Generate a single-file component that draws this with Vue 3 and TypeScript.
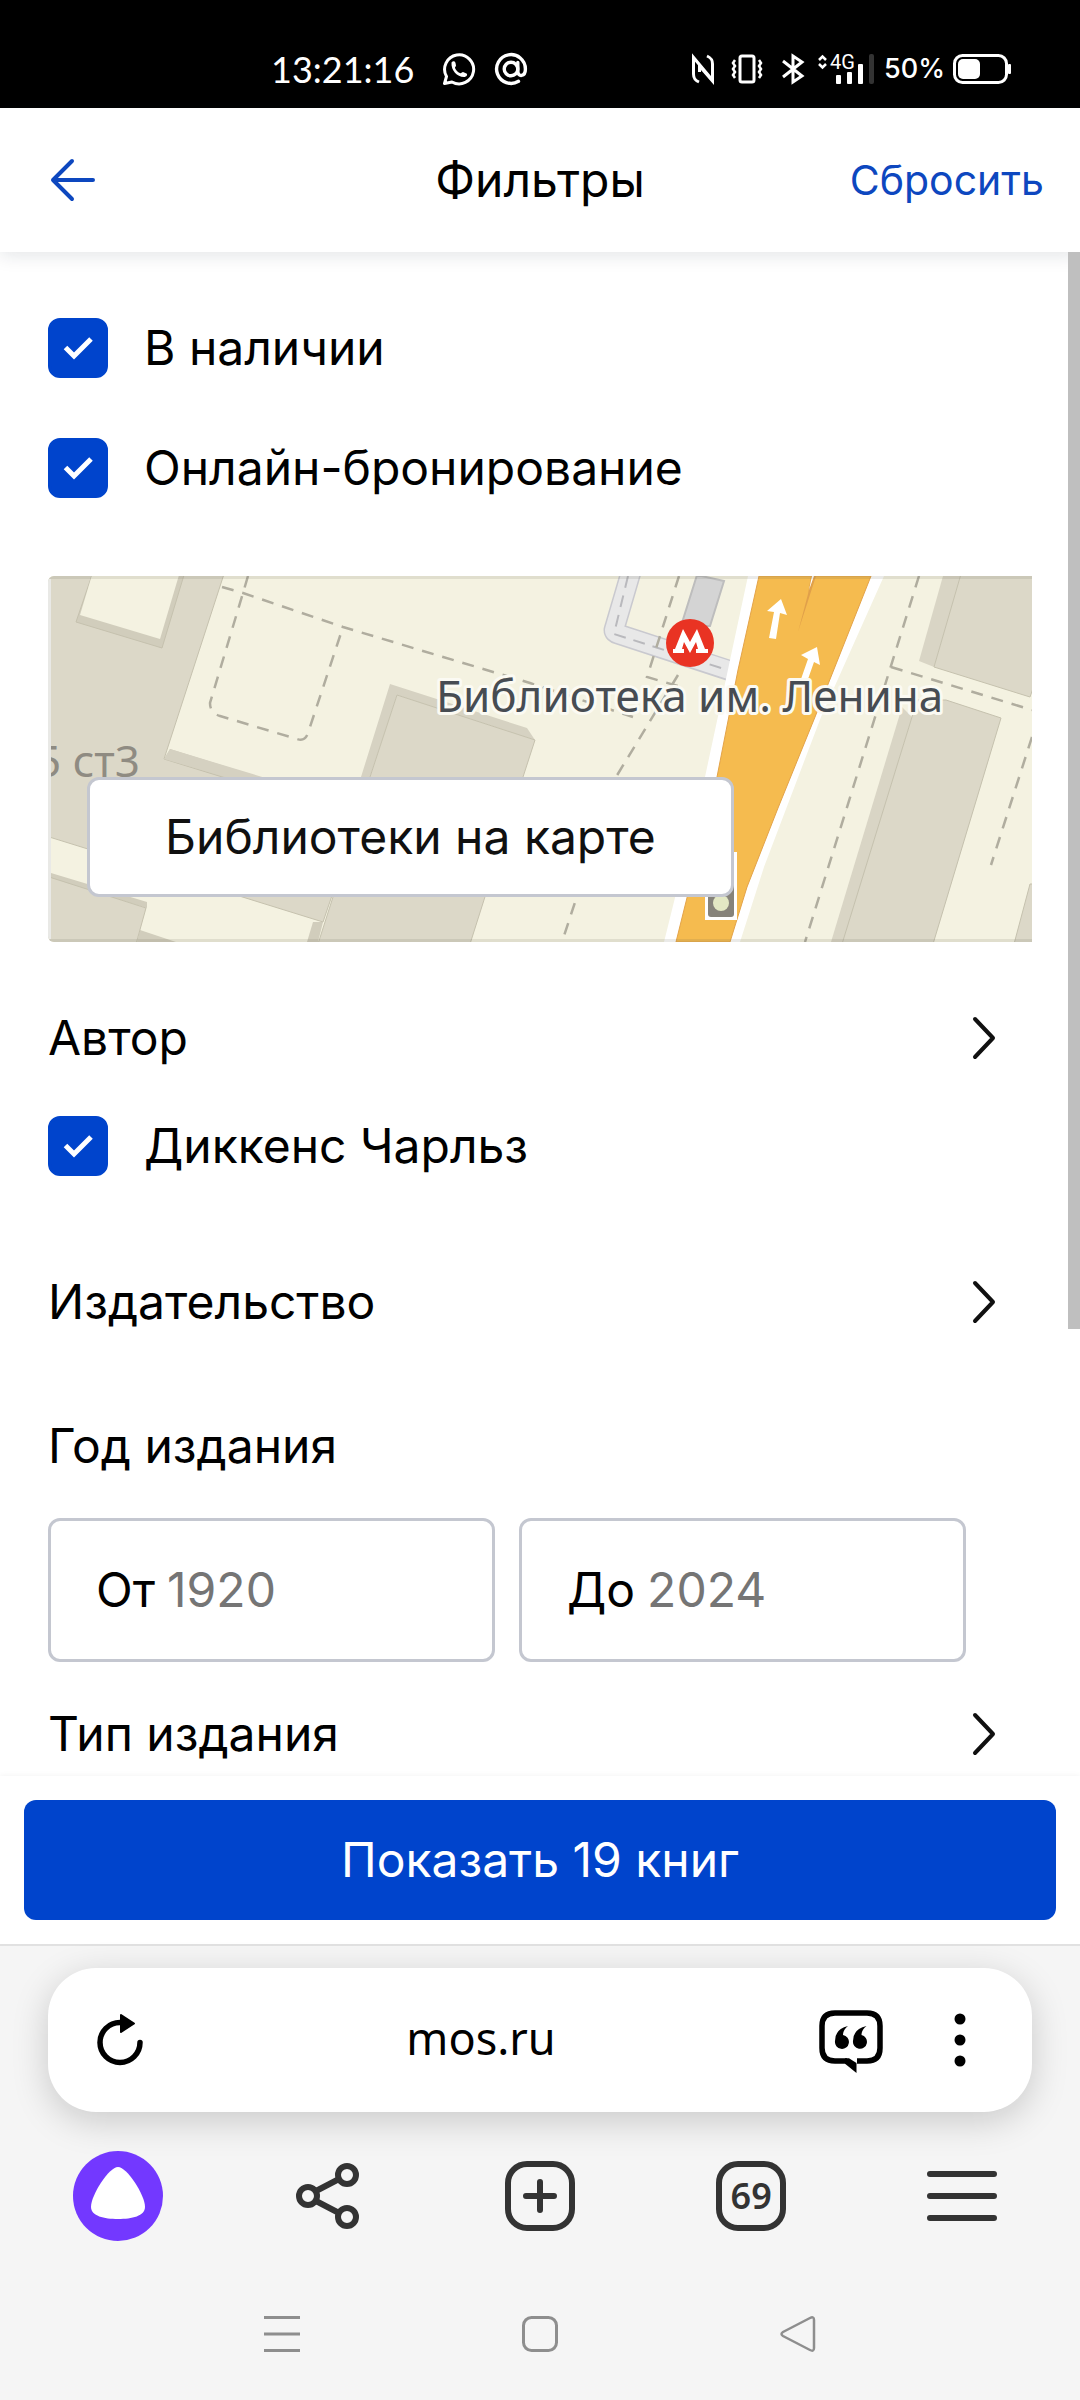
<script setup lang="ts">
import { ref } from 'vue'

interface Option {
  id: string
  label: string
  checked: boolean
}

const availability = ref<Option[]>([
  { id: 'in-stock', label: 'В наличии', checked: true },
  { id: 'online', label: 'Онлайн-бронирование', checked: true },
])
const authors = ref<Option[]>([{ id: 'dickens', label: 'Диккенс Чарльз', checked: true }])
const yearFrom = ref('')
const yearTo = ref('')
const found = 19
const openTabs = 69
</script>

<template>
  <div class="screen">
    <div class="status">
      <div class="status-group left">
        <span class="clock">13:21:16</span>
        <svg width="34" height="34" viewBox="0 0 34 34" fill="none" stroke="#fff" stroke-width="3">
          <path d="M2.500 31.500 L4.500 24.500 A14.500 14.500 0 1 1 10 30 Z" stroke-linejoin="round" />
          <path d="M9.500 10.500 C11 8.500 13 9 13.500 11 L14 13.500 C14 14.500 12.800 15 13 16 C14 18.500 16 20.500 18.500 21.200 C19.500 21.300 20 20 21 20 L24.500 21.500 C26 22.500 24.500 25 22 25 C15 25 9 18.500 9.500 10.500 Z" fill="#fff" stroke="none" />
        </svg>
        <svg width="34" height="34" viewBox="0 0 34 34" fill="none" stroke="#fff" stroke-width="3.400" stroke-linecap="round">
          <circle cx="17" cy="17" r="6.800" />
          <path d="M23.800 10.500 V19 C23.800 25.500 31.400 25 31.400 17 A14.400 14.400 0 1 0 24.500 29.300" />
        </svg>
      </div>
      <div class="status-group right">
        <svg class="nfc" width="24" height="32" viewBox="0 0 24 32" fill="none" stroke="#fff" stroke-width="3">
          <path d="M8 29 C3.500 27 2.500 25 2.500 21 V4.500 L20.500 26" />
          <path d="M16 3 C20.500 5 21.500 7 21.500 11 V28 L8.500 13 V19" />
        </svg>
        <svg class="vibrate" width="32" height="32" viewBox="0 0 32 32" fill="none" stroke="#fff" stroke-width="3">
          <rect x="9" y="3" width="14" height="26" rx="2" />
          <path d="M4 7 L2 10 L4 13 L2 16 L4 19 L2 22 L4 25 M28 7 L30 10 L28 13 L30 16 L28 19 L30 22 L28 25" stroke-width="2.500" />
        </svg>
        <svg class="bluetooth" width="24" height="32" viewBox="0 0 24 32" fill="none" stroke="#fff" stroke-width="3">
          <path d="M2 8 L21 23 L12 29 V3 L21 9 L2 24" />
        </svg>
        <svg class="signal" width="58" height="32" viewBox="0 0 58 32" fill="#fff">
          <path d="M2 7 L5.500 3.500 L9 7 M2 11 L5.500 14.500 L9 11" fill="none" stroke="#fff" stroke-width="2.500" />
          <text x="13" y="16" class="net">4G</text>
          <rect x="19" y="22" width="5" height="9" rx="1" />
          <rect x="30" y="19" width="5" height="12" rx="1" />
          <rect x="41" y="11" width="5" height="20" rx="1" />
          <rect x="52" y="1" width="5" height="30" rx="2" fill="#333" />
        </svg>
        <span class="percent">50%</span>
        <svg width="58" height="32" viewBox="0 0 58 32" fill="none">
          <rect x="1.500" y="2.500" width="52" height="27" rx="8" stroke="#fff" stroke-width="3" />
          <rect x="5" y="6" width="22" height="20" rx="5" fill="#fff" />
          <rect x="55" y="11" width="3" height="10" rx="1" fill="#fff" />
        </svg>
      </div>
    </div>

    <header class="header">
      <button class="plain back" type="button" aria-label="Назад">
        <svg width="48" height="48" viewBox="0 0 48 48" fill="none" stroke="#0d47bf" stroke-width="4" stroke-linecap="round" stroke-linejoin="round">
          <path d="M45 24 H5 M24 5 L5 24 L24 43" />
        </svg>
      </button>
      <h1 class="title">Фильтры</h1>
      <button class="plain reset" type="button">Сбросить</button>
    </header>

    <main class="filters">
      <div class="scrollbar"></div>

      <div class="options">
        <label v-for="o in availability" :key="o.id" class="option">
          <span class="tick">
            <input v-model="o.checked" type="checkbox" />
            <svg v-if="o.checked" width="60" height="60" viewBox="0 0 60 60"><path d="M17.500 29.500 L26 38 L43 21" /></svg>
          </span>
          {{ o.label }}
        </label>
      </div>

      <div class="map">
        <svg class="map-art" viewBox="0 0 984 366" preserveAspectRatio="xMinYMid slice">
          <rect width="984" height="366" fill="#f4f2e1" />
          <g fill="#d1cdbc">
            <path d="M122 173 L320 235 L310 260 L116 183 Z" />
            <path d="M265 346 L275 346 L270 366 L259 366 Z" />
            <path d="M92 354 L128 366 L89 366 Z" />
            <path d="M3 297 L99 326 L99 332 L3 303 Z" />
          </g>
          <path d="M342 108 L479 152 L487 164 L349 119 L322 201 L313 201 Z" fill="#d6d2c2" />
          <g fill="#dcd8c8" stroke="#c5c1ae" stroke-width="1">
            <path d="M-2 -2 H176 L116 183 L310 243 L275 346 L-2 260 Z" />
            <path d="M349 119 L487 164 L475 201 L422 368 H270 L285 321 L322 201 Z" />
            <path d="M-2 300 L98 332 L88 368 H-2 Z" />
          </g>
          <path d="M122 173 L310 230 V240 L116 183 Z" fill="#d5d1c1" />
          <path d="M44 -1 L28 46 L114 72 L136 -1 Z" fill="#d1cdbc" stroke="#c5c1ae" stroke-width="1" />
          <path d="M44 -1 L32 39 L112 63 L131 -1 Z" fill="#f4f2e1" />
          <g fill="#d9d5c5">
            <path d="M895 0 L871 85 L886 91 L913 0 Z" />
            <path d="M854 131 L783 366 H795 L864 141 Z" />
          </g>
          <g fill="#dcd8c8" stroke="#c5c1ae" stroke-width="1">
            <path d="M913 -2 L886 91 L982 121 L990 98 V-2 Z" />
            <path d="M864 141 L868 124 L898 124 L953 142 L885 368 H794 Z" />
            <path d="M982 308 L966 368 H990 V308 Z" />
          </g>
          <g fill="none" stroke-linejoin="round">
            <path d="M583 -4 L566 54 Q566 57 570 58 L692 98" stroke="#c9c9cf" stroke-width="21" />
            <path d="M583 -4 L566 54 Q566 57 570 58 L693 98" stroke="#e8e8e8" stroke-width="18" />
            <path d="M580 0 L566 58 L692 98" stroke="#b9b9bd" stroke-width="2" stroke-dasharray="12 8" />
          </g>
          <path d="M649 -1 L676 5 L662 50 L633 50 Z" fill="#d4d4d4" stroke="#bdbdbd" stroke-width="2" />
          <g fill="none" stroke="#b0ad9f" stroke-width="2.500" stroke-dasharray="12 9">
            <path d="M174 11 L195 17 L295 51 L482 107 L585 141" />
            <path d="M200 0 L195 17 L162 127 Q162 137 172 140 L249 163 Q257 166 260 157 L295 51" />
            <path d="M631 0 L599 101 L630 110" />
            <path d="M630 99 L568 201 L514 366" />
            <path d="M871 0 L757 366" />
            <path d="M843 91 L984 134" />
            <path d="M984 161 L943 289" />
          </g>
          <path d="M700 0 L657 201 L616 366 H692 L716 291 L773 141 L836 0 Z" fill="#fff" />
          <path d="M711 0 L690 94 L669 201 L628 366 H682 L699 311 L730 232 L767 141 L823 0 Z" fill="#f5bb4f" stroke="#e3a349" stroke-width="1" />
          <path d="M763 0 L760 18 L750 56 L768 0 Z" fill="#e0a04a" />
          <path d="M764 0 L761 14 L766 0 Z" fill="#fff" />
          <g fill="#fff">
            <path d="M733 23 L739 39 L732 37 L728 63 L721 62 L726 36 L719 35 Z" />
            <path d="M769 71 L772 89 L766 86 L759 106 L753 103 L760 83 L753 79 Z" />
            <path d="M684 276 H689 V344 H657 V320 Z" />
          </g>
          <rect x="660" y="277" width="26" height="64" rx="3" fill="#86837a" />
          <circle cx="673" cy="327" r="8" fill="#e3e8c4" />
          <circle cx="642" cy="67" r="24" fill="#e93323" />
          <path d="M625 77 V73 H627 L635 53 L642 66 L649 53 L657 73 H660 V77 H648 V73 H650 L648 66 L642 77 L636 66 L634 73 H636 V77 Z" fill="#fff" />
          <text class="place" x="388" y="136">Библиотека им. Ленина</text>
          <text class="house" x="92" y="201" text-anchor="end">5 ст3</text>
        </svg>
        <button class="map-button" type="button">Библиотеки на карте</button>
      </div>

      <button class="plain section" type="button">
        Автор
        <svg width="30" height="48" viewBox="0 0 30 48"><path d="M6 5 L24 24 L6 43" /></svg>
      </button>
      <div class="options author">
        <label v-for="o in authors" :key="o.id" class="option">
          <span class="tick">
            <input v-model="o.checked" type="checkbox" />
            <svg v-if="o.checked" width="60" height="60" viewBox="0 0 60 60"><path d="M17.500 29.500 L26 38 L43 21" /></svg>
          </span>
          {{ o.label }}
        </label>
      </div>

      <button class="plain section" type="button">
        Издательство
        <svg width="30" height="48" viewBox="0 0 30 48"><path d="M6 5 L24 24 L6 43" /></svg>
      </button>

      <fieldset class="years">
        <legend>Год издания</legend>
        <div class="year-row">
          <label class="field">От<input v-model="yearFrom" type="text" inputmode="numeric" placeholder="1920" /></label>
          <label class="field">До<input v-model="yearTo" type="text" inputmode="numeric" placeholder="2024" /></label>
        </div>
      </fieldset>

      <button class="plain section" type="button">
        Тип издания
        <svg width="30" height="48" viewBox="0 0 30 48"><path d="M6 5 L24 24 L6 43" /></svg>
      </button>
    </main>

    <footer class="apply">
      <button class="show" type="button">Показать {{ found }} книг</button>
    </footer>

    <div class="browser">
      <div class="omnibox">
        <button class="plain" type="button" aria-label="Обновить">
          <svg width="48" height="54" viewBox="0 0 48 54">
            <path d="M24 9.500 A20 20 0 1 0 44 29.500" fill="none" stroke="#000" stroke-width="5.500" stroke-linecap="round" />
            <path d="M25 2 L38 10.500 L25 19 Z" stroke="#000" stroke-width="2" stroke-linejoin="round" />
          </svg>
        </button>
        <span class="host">mos.ru</span>
        <div class="omni-actions">
          <button class="plain" type="button" aria-label="Отзывы">
            <svg width="66" height="66" viewBox="0 0 66 66">
              <path d="M39 54 H49 Q62 54 62 41 V19 Q62 6 49 6 H17 Q4 6 4 19 V41 Q4 54 17 54 H29" fill="none" stroke="#000" stroke-width="5.500" />
              <path d="M27 51.250 H31 L38.500 56 V66 L27 56.750 Z" />
              <path d="M30 19 Q17 22 17 34 A7 7 0 1 0 25 28 Q25 23 30 19 Z M48.500 19 Q35 22 35 34 A7 7 0 1 0 43.500 28 Q43.500 23 48.500 19 Z" />
            </svg>
          </button>
          <button class="plain" type="button" aria-label="Ещё">
            <svg width="14" height="56" viewBox="0 0 14 56"><circle cx="7" cy="7" r="5.500" /><circle cx="7" cy="28" r="5.500" /><circle cx="7" cy="49" r="5.500" /></svg>
          </button>
        </div>
      </div>

      <nav class="toolbar">
        <button class="plain" type="button" aria-label="Алиса">
          <svg width="90" height="90" viewBox="0 0 90 90">
            <circle cx="45" cy="45" r="45" fill="#7338ff" />
            <path d="M45 16 C54 16 72 44 72 56 C72 65 59 68 45 68 C31 68 18 65 18 56 C18 44 36 16 45 16 Z" fill="#fff" />
          </svg>
        </button>
        <button class="plain" type="button" aria-label="Поделиться">
          <svg width="66" height="68" viewBox="0 0 66 68" fill="none" stroke="#333" stroke-width="6">
            <circle cx="12" cy="34" r="9" /><circle cx="51" cy="13" r="9" /><circle cx="51" cy="55" r="9" />
            <path d="M20 29 L43 17 M20 39 L43 51" />
          </svg>
        </button>
        <button class="plain" type="button" aria-label="Новая вкладка">
          <svg width="70" height="70" viewBox="0 0 70 70" fill="none" stroke="#333" stroke-width="6" stroke-linecap="round">
            <rect x="3" y="3" width="64" height="64" rx="19" /><path d="M35 21 V49 M21 35 H49" />
          </svg>
        </button>
        <button class="plain tabs" type="button">{{ openTabs }}</button>
        <button class="plain" type="button" aria-label="Меню">
          <svg width="72" height="54" viewBox="0 0 72 54" stroke="#333" stroke-width="6" stroke-linecap="round"><path d="M4 5 H68 M4 27 H68 M4 49 H68" /></svg>
        </button>
      </nav>

      <nav class="system">
        <button class="plain" type="button" aria-label="Недавние">
          <svg width="36" height="36" viewBox="0 0 36 36" stroke="#8e8e8e" stroke-width="3"><path d="M0 1.500 H36 M0 18 H36 M0 34.500 H36" /></svg>
        </button>
        <button class="plain" type="button" aria-label="Домой">
          <svg width="36" height="36" viewBox="0 0 36 36" fill="none" stroke="#8e8e8e" stroke-width="3"><rect x="1.500" y="1.500" width="33" height="33" rx="8" /></svg>
        </button>
        <button class="plain" type="button" aria-label="Вернуться">
          <svg width="36" height="36" viewBox="0 0 36 36" fill="none" stroke="#8e8e8e" stroke-width="2.500"><path d="M30 2 Q34 0 34 4 V32 Q34 36 30 34 L3 20 Q0 18 3 16 Z" /></svg>
        </button>
      </nav>
    </div>
  </div>
</template>

<style>
body {
  margin: 0;
  background: #f5f5f5;
}
</style>

<style scoped>
.screen {
  display: flex;
  flex-direction: column;
  min-height: 100vh;
  background: #f5f5f5;
  color: #000;
  font-family: Inter, 'Open Sans', sans-serif;
  font-size: 48px;
  line-height: 60px;
}
svg {
  display: block;
  flex: none;
}
.plain {
  margin: 0;
  padding: 0;
  border: 0;
  background: none;
  color: inherit;
  font: inherit;
}

.status {
  display: flex;
  justify-content: space-between;
  align-items: center;
  box-sizing: border-box;
  height: 108px;
  padding: 30px 69px 0 271px;
  background: #000;
  color: #fff;
}
.status-group {
  display: flex;
  align-items: center;
}
.left {
  gap: 18px;
}
.clock {
  margin-right: 10px;
  font-family: Lato, sans-serif;
  font-size: 36px;
}
.nfc {
  margin-right: 16px;
}
.vibrate {
  margin-right: 18px;
}
.bluetooth {
  margin-right: 12px;
}
.signal {
  overflow: visible;
}
.net {
  font-family: Roboto, sans-serif;
  font-size: 20px;
}
.percent {
  margin: 0 8px 0 9px;
  font-size: 27px;
  font-weight: 500;
}

.header {
  position: relative;
  z-index: 1;
  display: grid;
  grid-template-columns: 1fr auto 1fr;
  align-items: center;
  height: 144px;
  padding: 0 36px;
  background: #fff;
  box-shadow: 0 3px 18px rgba(20, 30, 50, 0.12);
}
.back {
  justify-self: start;
  margin-left: 12px;
}
.title {
  margin: 0;
  font-size: 48px;
  font-weight: 400;
}
.reset {
  justify-self: end;
  color: #0d47bf;
  font-size: 41px;
}

.filters {
  position: relative;
  display: flex;
  flex-direction: column;
  padding: 66px 48px 12px;
  background: #fff;
}
.scrollbar {
  position: absolute;
  z-index: 2;
  top: 0;
  right: 0;
  width: 12px;
  height: 70.7%;
  background: #bfbfbf;
}
.options {
  display: flex;
  flex-direction: column;
  gap: 60px;
}
.author {
  margin: 48px 0 96px;
}
.option {
  display: flex;
  align-items: center;
  gap: 36px;
}
.tick {
  display: grid;
  width: 60px;
  height: 60px;
}
.tick > * {
  grid-area: 1 / 1;
}
.tick input {
  appearance: none;
  width: 60px;
  height: 60px;
  margin: 0;
  border-radius: 12px;
  border: 3px solid #c4c7d0;
}
.tick input:checked {
  border-color: #0044cc;
  background: #0044cc;
}
.tick svg {
  z-index: 1;
  pointer-events: none;
}
.tick path {
  fill: none;
  stroke: #fff;
  stroke-width: 5px;
}

.map {
  position: relative;
  height: 366px;
  margin: 78px 0 66px;
  border-radius: 6px 0 0 6px;
  overflow: hidden;
}
.map::after {
  content: '';
  position: absolute;
  inset: 0;
  border: solid rgba(90, 90, 80, 0.13);
  border-width: 3px 0;
  box-shadow: inset 3px 0 0 #e9e9e6;
  pointer-events: none;
}
.map-art {
  width: 100%;
  height: 100%;
}
.place,
.house {
  font-family: 'Noto Sans', sans-serif;
  font-size: 44px;
}
.place {
  fill: #474c52;
  stroke: #fbfaf3;
  stroke-width: 6px;
  stroke-linejoin: round;
  paint-order: stroke;
}
.house {
  fill: #8f8b82;
}
.map-button {
  position: absolute;
  z-index: 1;
  left: 39px;
  bottom: 45px;
  height: 120px;
  padding: 0 75px;
  border: 3px solid #c4c7d0;
  border-radius: 12px;
  background: #fff;
  color: #101010;
  font: inherit;
}

.section {
  display: flex;
  justify-content: space-between;
  align-items: center;
  height: 60px;
  padding-right: 33px;
  text-align: left;
}
.section path {
  fill: none;
  stroke: #101010;
  stroke-width: 4px;
  stroke-linecap: round;
  stroke-linejoin: round;
}
.years {
  min-width: 0;
  margin: 84px 66px 42px 0;
  padding: 0;
  border: 0;
}
.years legend {
  padding: 0;
}
.year-row {
  display: flex;
  gap: 24px;
  margin-top: 42px;
}
.field {
  display: flex;
  flex: 1;
  align-items: center;
  gap: 12px;
  box-sizing: border-box;
  min-width: 0;
  height: 144px;
  padding: 0 45px;
  border: 3px solid #c4c7d0;
  border-radius: 12px;
}
.field input {
  flex: 1;
  min-width: 0;
  padding: 0;
  border: 0;
  outline: 0;
  background: none;
  color: inherit;
  font: inherit;
}
.field input::placeholder {
  color: #757575;
  opacity: 1;
}

.apply {
  position: relative;
  padding: 24px;
  background: #fff;
  box-shadow: 0 0 6px rgba(0, 0, 0, 0.06);
}
.show {
  display: block;
  width: 100%;
  height: 120px;
  border: 0;
  border-radius: 12px;
  background: #0044cc;
  color: #fff;
  font: inherit;
}

.browser {
  position: relative;
  border-top: 2px solid #e1e1e1;
  background: #f5f5f5;
}
.omnibox {
  display: flex;
  align-items: center;
  height: 144px;
  margin: 22px 48px 0;
  padding: 0 65px 0 48px;
  border-radius: 48px;
  background: #fff;
  box-shadow: 0 9px 36px rgba(0, 0, 0, 0.18);
}
.host {
  flex: 1;
  padding-bottom: 4px;
  font-family: 'Noto Sans', sans-serif;
  font-size: 45px;
  text-align: center;
}
.omni-actions {
  display: flex;
  align-items: center;
  gap: 69px;
}
.toolbar {
  display: grid;
  grid-template-columns: repeat(5, 1fr);
  align-items: center;
  justify-items: center;
  height: 168px;
  padding: 0 12px;
}
.tabs {
  box-sizing: border-box;
  width: 70px;
  height: 70px;
  border: 6px solid #333;
  border-radius: 22px;
  color: #333;
  font-family: 'Noto Sans', sans-serif;
  font-size: 36px;
  font-weight: 600;
  line-height: 58px;
}
.system {
  display: flex;
  justify-content: center;
  align-items: center;
  gap: 222px;
  height: 108px;
  padding-bottom: 12px;
}
</style>
